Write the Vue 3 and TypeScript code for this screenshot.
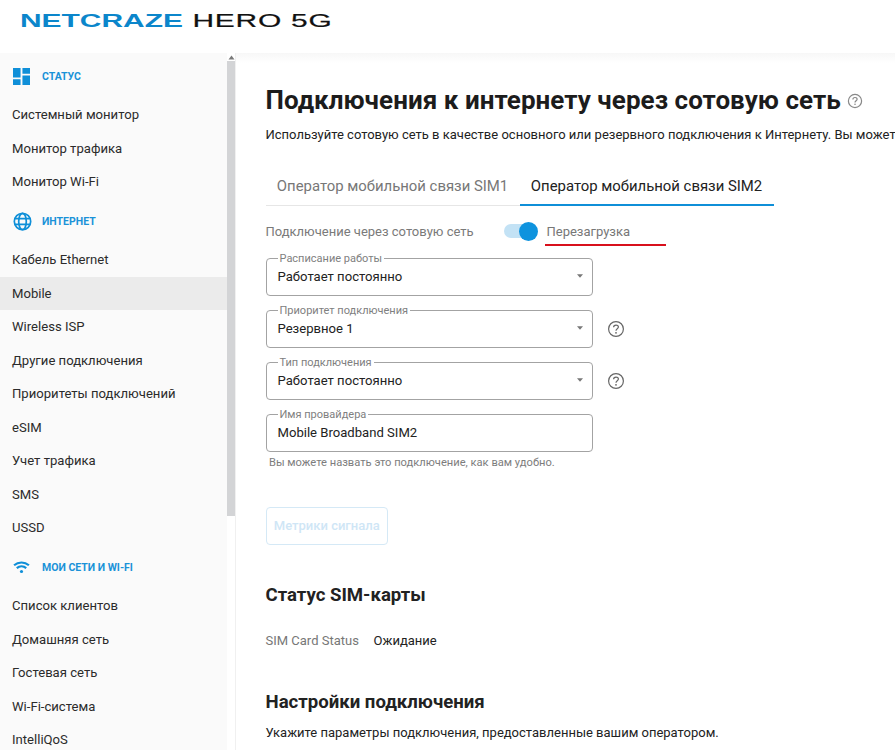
<script setup lang="ts">
interface Group { title: string; icon: string; items: string[] }
const groups: Group[] = [
  { title: 'СТАТУС', icon: 'grid', items: ['Системный монитор', 'Монитор трафика', 'Монитор Wi-Fi'] },
  { title: 'ИНТЕРНЕТ', icon: 'globe', items: ['Кабель Ethernet', 'Mobile', 'Wireless ISP', 'Другие подключения', 'Приоритеты подключений', 'eSIM', 'Учет трафика', 'SMS', 'USSD'] },
  { title: 'МОИ СЕТИ И WI-FI', icon: 'wifi', items: ['Список клиентов', 'Домашняя сеть', 'Гостевая сеть', 'Wi-Fi-система', 'IntelliQoS'] },
]
const fields = [
  { label: 'Расписание работы', value: 'Работает постоянно', help: false },
  { label: 'Приоритет подключения', value: 'Резервное 1', help: true },
  { label: 'Тип подключения', value: 'Работает постоянно', help: true },
]
</script>

<template>
  <div class="page">
    <header class="top">
      <div class="logo"><span class="logo-blue">NETCRAZE</span><span class="logo-dark">HERO 5G</span></div>
    </header>
    <div class="body">
      <aside class="side">
        <nav class="nav">
          <template v-for="g in groups" :key="g.title">
            <div class="group">
              <span class="gicon">
                <svg v-if="g.icon === 'grid'" width="17" height="17" viewBox="0 0 18 18" fill="#0f8fd8"><path d="M0 0h8v10H0zM10 0h8v6h-8zM0 12h8v6H0zM10 8h8v10h-8z"/></svg>
                <svg v-else-if="g.icon === 'globe'" width="19" height="19" viewBox="0 0 20 20" fill="none" stroke="#0f8fd8" stroke-width="1.8"><circle cx="10" cy="10" r="8.600"/><ellipse cx="10" cy="10" rx="4" ry="8.600"/><path d="M1.800 7h16.400M1.800 13h16.400"/></svg>
                <svg v-else width="17" height="13" viewBox="0 0 18 14" fill="none" stroke="#0f8fd8" stroke-width="2.300"><path d="M1 4.600C5.600.6 12.400.6 17 4.600M3.900 7.700c3-2.600 7.200-2.600 10.200 0"/><circle cx="9" cy="11.300" r="1.700" fill="#0f8fd8" stroke="none"/></svg>
              </span>
              <span class="gtitle">{{ g.title }}</span>
            </div>
            <a v-for="i in g.items" :key="i" class="item" :class="{ active: i === 'Mobile' }">{{ i }}</a>
          </template>
        </nav>
        <div class="scroll">
          <svg class="arrow" width="7" height="5" viewBox="0 0 7 5"><path d="M3.500 0.500 6.500 4.500H.5z" fill="#7a7a7a"/></svg>
          <div class="thumb"></div>
        </div>
      </aside>
      <main class="main">
        <div class="title-row">
          <h1>Подключения к интернету через сотовую сеть</h1>
          <svg class="help" width="16" height="16" viewBox="0 0 16 16" fill="none" stroke="#888" stroke-width="1.200"><circle cx="8" cy="8" r="6.600"/><path d="M5.900 6.400C5.900 5.200 6.900 4.500 8 4.500S10.100 5.200 10.100 6.300C10.100 7.700 8 7.800 8 9.500"/><circle cx="8" cy="11.300" r=".8" fill="#888" stroke="none"/></svg>
        </div>
        <p class="sub">Используйте сотовую сеть в качестве основного или резервного подключения к Интернету. Вы можете</p>
        <div class="tabs">
          <button class="tab">Оператор мобильной связи SIM1</button>
          <button class="tab on">Оператор мобильной связи SIM2</button>
        </div>
        <div class="toggle-row">
          <span class="toggle-label">Подключение через сотовую сеть</span>
          <span class="switch"><span class="knob"></span></span>
          <span class="restart">Перезагрузка<i class="redline"></i></span>
        </div>
        <div class="fields">
          <div v-for="f in fields" :key="f.label" class="frow">
            <fieldset class="box">
              <legend>{{ f.label }}</legend>
              <span class="val">{{ f.value }}</span>
              <svg class="caret" width="6" height="4" viewBox="0 0 7 4"><path d="M0 0h7L3.500 4z" fill="#777"/></svg>
            </fieldset>
            <svg v-if="f.help" class="fhelp" width="18" height="18" viewBox="0 0 18 18" fill="none" stroke="#666" stroke-width="1.200"><circle cx="9" cy="9" r="7.400"/><path d="M6.600 7.200C6.600 5.900 7.700 5.100 9 5.100S11.400 5.900 11.400 7.100C11.400 8.700 9 8.800 9 10.700"/><circle cx="9" cy="12.800" r=".9" fill="#666" stroke="none"/></svg>
          </div>
          <div class="frow">
            <fieldset class="box">
              <legend>Имя провайдера</legend>
              <span class="val">Mobile Broadband SIM2</span>
            </fieldset>
          </div>
        </div>
        <p class="hint">Вы можете назвать это подключение, как вам удобно.</p>
        <button class="metrics" disabled>Метрики сигнала</button>
        <h2 class="h-sim">Статус SIM-карты</h2>
        <div class="status"><span class="st-k">SIM Card Status</span><span class="st-v">Ожидание</span></div>
        <h2 class="h-conn">Настройки подключения</h2>
        <p class="conn-text">Укажите параметры подключения, предоставленные вашим оператором.</p>
      </main>
    </div>
  </div>
</template>

<style>
html, body { margin: 0; background: #fff; overflow: hidden; }
</style>

<style scoped>
.page { width: 895px; height: 750px; overflow: hidden; display: flex; flex-direction: column; font-family: Roboto, "Noto Sans", sans-serif; color: #222; background: #fff; }
.top { height: 53px; flex: none; background: #fff; padding: 0 0 0 20px; display: flex; align-items: flex-start; }
.logo { margin-top: 11px; display: flex; gap: 6px; font-family: "Liberation Sans", Arial, sans-serif; font-size: 19px; line-height: 20px; transform: scaleX(1.575); transform-origin: left center; white-space: nowrap; }
.logo-blue { color: #0b86cb; font-weight: 700; }
.logo-dark { color: #111; font-weight: 400; letter-spacing: .5px; -webkit-text-stroke: .2px #111; }
.body { flex: 1; display: flex; min-height: 0; }
.side { width: 236px; flex: none; background: #fafafa; display: flex; overflow: hidden; border-right: 1px solid #f0f0f0; box-sizing: border-box; }
.nav { width: 227px; flex: none; padding-top: .5px; }
.group { height: 44.500px; box-sizing: border-box; padding-top: 1.500px; display: flex; align-items: center; }
.gicon { width: 42px; padding-left: 13px; box-sizing: border-box; display: flex; flex: none; }
.gtitle { font-size: 10.500px; font-weight: 700; color: #1a92d8; }
.item { display: flex; align-items: center; height: 33.500px; padding-left: 12px; font-size: 13.100px; color: #2b2b2b; }
.item.active { background: #ebebeb; }
.scroll { width: 8px; flex: none; background: #fff; display: flex; flex-direction: column; align-items: center; }
.arrow { margin-top: 2px; }
.thumb { width: 8px; height: 455px; margin-top: 1px; background: #d3d4d6; }
.main { flex: 1; min-width: 0; padding: 0 0 0 29.500px; background: linear-gradient(#f7f7f7, #fff 10px); overflow: hidden; }
.title-row { display: flex; align-items: center; gap: 6px; margin-top: 31px; height: 32px; white-space: nowrap; }
h1 { margin: 0; font-size: 26px; font-weight: 700; color: #1c1c1c; letter-spacing: .04px; }
.help { flex: none; margin-top: 2px; }
.sub { margin: 11px 0 0; font-size: 13px; line-height: 16px; white-space: nowrap; color: #222; }
.tabs { display: flex; margin-top: 25px; width: 508px; border-bottom: 1px solid #e6e6e6; }
.tab { width: 254px; height: 36px; box-sizing: content-box; border: 0; background: none; padding: 0; font: 14.900px Roboto, sans-serif; color: #777; margin-bottom: -1px; border-bottom: 2px solid transparent; }
.tab.on { color: #222; border-bottom-color: #0f8fd8; }
.toggle-row { display: flex; align-items: center; margin-top: 13px; height: 24px; }
.toggle-label { width: 238px; font-size: 13px; color: #7a7a7a; }
.switch { position: relative; width: 32px; height: 14px; border-radius: 7px; background: #c3e2f5; flex: none; }
.knob { position: absolute; right: -2px; top: -2.500px; width: 19px; height: 19px; border-radius: 50%; background: #0e93de; }
.restart { position: relative; margin-left: 11px; font-size: 13px; color: #777; }
.redline { position: absolute; left: -2px; top: 20px; width: 121px; height: 2.500px; background: #d8101c; }
.fields { display: flex; flex-direction: column; gap: 9px; margin-top: 9.500px; }
.frow { display: flex; align-items: center; gap: 14px; }
.box { position: relative; width: 327.500px; height: 43px; box-sizing: border-box; margin: 0; padding: 0 11px; border: 1px solid #a3a3a3; border-radius: 4px; display: flex; align-items: center; }
legend { font-size: 11px; line-height: 11px; color: #808080; padding: 0 2px; margin-left: 0; }
.val { font-size: 13.100px; color: #222; margin-bottom: 6px; }
.caret { position: absolute; right: 9px; top: 10px; }
.fhelp { flex: none; margin-top: 5px; }
.hint { margin: 4px 0 0 3.500px; font-size: 11.150px; line-height: 14px; color: #7d7d7d; }
.metrics { display: block; margin-top: 37px; width: 122.500px; height: 38px; box-sizing: border-box; background: #fff; border: 1px solid #d5e9f6; border-radius: 4px; font: 500 13px Roboto, sans-serif; color: #cfe6f6; padding: 0; }
h2 { margin: 0; font-size: 18.600px; line-height: 22px; font-weight: 700; color: #222; }
.h-sim { margin-top: 39px; }
.status { margin-top: 27px; display: flex; font-size: 13px; line-height: 16px; }
.st-k { width: 108px; color: #777; }
.st-v { color: #222; }
.h-conn { margin-top: 42px; }
.conn-text { margin: 12px 0 0; font-size: 13px; line-height: 16px; color: #222; white-space: nowrap; }
</style>
